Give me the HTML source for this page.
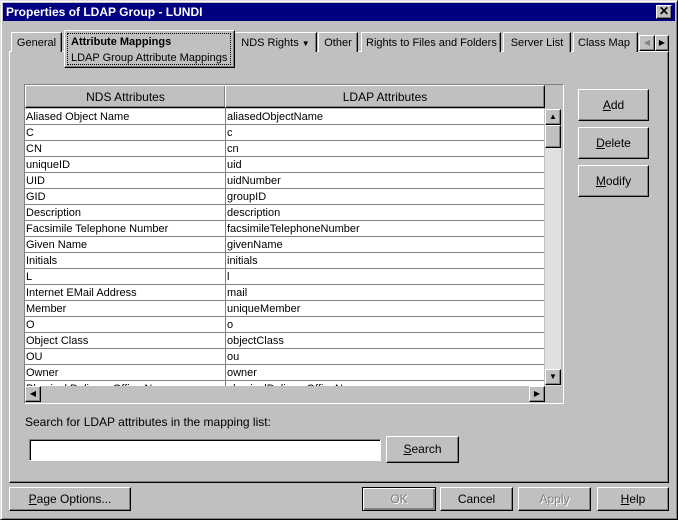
<!DOCTYPE html>
<html><head><meta charset="utf-8"><style>
*{box-sizing:border-box;margin:0;padding:0}
body{width:678px;height:520px;background:#c0c0c0;font-family:"Liberation Sans",sans-serif;font-size:11px;color:#000;position:relative;overflow:hidden}
.a{position:absolute}
.win{left:0;top:0;width:678px;height:520px;border:1px solid;border-color:#dfdfdf #000 #000 #dfdfdf;box-shadow:inset 1px 1px 0 #fff,inset -1px -1px 0 #808080}
.title{left:3px;top:3px;width:672px;height:18px;background:#000080;color:#fff;font-weight:bold;font-size:12px;line-height:18px;padding-left:3px}
.btn{position:absolute;background:#c0c0c0;border:1px solid;border-color:#fff #000 #000 #fff;box-shadow:inset -1px -1px 0 #808080;text-align:center;font-size:12px}
.tab{position:absolute;top:32px;height:20px;border:1px solid;border-bottom:none;border-color:#fff #000 #000 #fff;box-shadow:inset -1px 0 0 #808080;font-size:11px;line-height:20px;padding:0 4px;background:#c0c0c0;white-space:nowrap;overflow:hidden;text-align:center}
.row{position:absolute;left:0;width:519px;height:16px;border-bottom:1px solid #808080;background:#fff;font-size:11px;line-height:17px}
.row span{position:absolute;top:0}
.c1{left:1px}.c2{left:202px}
u{text-decoration:underline}
</style></head><body>
<div class="a win"></div>
<div class="a title">Properties of LDAP Group - LUNDI</div>
<div class="btn" style="left:656px;top:5px;width:16px;height:14px;font-size:12px;line-height:11px;font-weight:bold">✕</div>

<div class="a" style="left:9px;top:51px;width:660px;height:432px;border:1px solid;border-color:#fff #000 #000 #fff;box-shadow:inset -1px -1px 0 #808080"></div>

<div class="tab" style="left:11px;width:51px">General</div>
<div class="tab" style="left:234px;width:83px">NDS Rights <span style="font-size:8px">▼</span></div>
<div class="tab" style="left:318px;width:40px">Other</div>
<div class="tab" style="left:361px;width:140px">Rights to Files and Folders</div>
<div class="tab" style="left:503px;width:68px">Server List</div>
<div class="tab" style="left:573px;width:65px;text-align:left">Class Map</div>
<div class="btn" style="left:639px;top:35px;width:16px;height:16px;font-size:8px;line-height:14px;color:#808080">◀</div>
<div class="btn" style="left:655px;top:35px;width:14px;height:16px;font-size:8px;line-height:14px">▶</div>

<div class="a" style="left:64px;top:30px;width:171px;height:38px;background:#c0c0c0;border:1px solid;border-color:#fff #000 #000 #fff;box-shadow:inset -1px -1px 0 #808080"></div>
<div class="a" style="left:67px;top:33px;width:164px;height:32px;border:1px dotted #000"></div>
<div class="a" style="left:71px;top:36px;font-weight:bold;font-size:11px">Attribute Mappings</div>
<div class="a" style="left:71px;top:52px;font-size:11px">LDAP Group Attribute Mappings</div>

<div class="a" style="left:24px;top:84px;width:540px;height:320px;border:1px solid;border-color:#808080 #fff #fff #808080;background:#c0c0c0"></div>
<div class="a" style="left:25px;top:85px;width:520px;height:301px;overflow:hidden;background:#c0c0c0">
 <div class="btn" style="left:0;top:0;width:201px;height:23px;line-height:23px">NDS Attributes</div>
 <div class="btn" style="left:200px;top:0;width:320px;height:23px;line-height:23px">LDAP Attributes</div>
 <div style="position:absolute;left:200px;top:23px;width:1px;height:280px;background:#808080;z-index:2"></div>
 <div class="row" style="top:24px"><span class="c1">Aliased Object Name</span><span class="c2">aliasedObjectName</span></div>
 <div class="row" style="top:40px"><span class="c1">C</span><span class="c2">c</span></div>
 <div class="row" style="top:56px"><span class="c1">CN</span><span class="c2">cn</span></div>
 <div class="row" style="top:72px"><span class="c1">uniqueID</span><span class="c2">uid</span></div>
 <div class="row" style="top:88px"><span class="c1">UID</span><span class="c2">uidNumber</span></div>
 <div class="row" style="top:104px"><span class="c1">GID</span><span class="c2">groupID</span></div>
 <div class="row" style="top:120px"><span class="c1">Description</span><span class="c2">description</span></div>
 <div class="row" style="top:136px"><span class="c1">Facsimile Telephone Number</span><span class="c2">facsimileTelephoneNumber</span></div>
 <div class="row" style="top:152px"><span class="c1">Given Name</span><span class="c2">givenName</span></div>
 <div class="row" style="top:168px"><span class="c1">Initials</span><span class="c2">initials</span></div>
 <div class="row" style="top:184px"><span class="c1">L</span><span class="c2">l</span></div>
 <div class="row" style="top:200px"><span class="c1">Internet EMail Address</span><span class="c2">mail</span></div>
 <div class="row" style="top:216px"><span class="c1">Member</span><span class="c2">uniqueMember</span></div>
 <div class="row" style="top:232px"><span class="c1">O</span><span class="c2">o</span></div>
 <div class="row" style="top:248px"><span class="c1">Object Class</span><span class="c2">objectClass</span></div>
 <div class="row" style="top:264px"><span class="c1">OU</span><span class="c2">ou</span></div>
 <div class="row" style="top:280px"><span class="c1">Owner</span><span class="c2">owner</span></div>
 <div class="row" style="top:296px"><span class="c1">Physical Delivery Office Name</span><span class="c2">physicalDeliveryOfficeName</span></div>
</div>
<div class="a" style="left:545px;top:109px;width:16px;height:277px;background:#e0e0e0"></div>
<div class="btn" style="left:545px;top:109px;width:16px;height:16px;font-size:8px;line-height:14px">▲</div>
<div class="btn" style="left:545px;top:125px;width:16px;height:23px"></div>
<div class="btn" style="left:545px;top:369px;width:16px;height:16px;font-size:8px;line-height:14px">▼</div>
<div class="a" style="left:25px;top:386px;width:520px;height:16px;background:#c0c0c0"></div>
<div class="btn" style="left:25px;top:386px;width:16px;height:16px;font-size:8px;line-height:14px">◀</div>
<div class="btn" style="left:529px;top:386px;width:16px;height:16px;font-size:8px;line-height:14px">▶</div>

<div class="btn" style="left:578px;top:89px;width:71px;height:32px;line-height:30px"><u>A</u>dd</div>
<div class="btn" style="left:578px;top:127px;width:71px;height:32px;line-height:30px"><u>D</u>elete</div>
<div class="btn" style="left:578px;top:165px;width:71px;height:32px;line-height:30px"><u>M</u>odify</div>

<div class="a" style="left:25px;top:415px;font-size:12px">Search for LDAP attributes in the mapping list:</div>
<div class="a" style="left:29px;top:439px;width:352px;height:22px;background:#fff;border:1px solid;border-color:#808080 #fff #fff #808080;box-shadow:inset 1px 1px 0 #000"></div>
<div class="btn" style="left:386px;top:436px;width:73px;height:27px;line-height:25px"><u>S</u>earch</div>

<div class="btn" style="left:9px;top:487px;width:122px;height:24px;line-height:22px"><u>P</u>age Options...</div>
<div class="btn" style="left:362px;top:487px;width:74px;height:24px;line-height:22px;color:#808080;border-color:#000;box-shadow:inset 1px 1px 0 #fff,inset -2px -2px 0 #808080;text-shadow:1px 1px 0 #fff">OK</div>
<div class="btn" style="left:440px;top:487px;width:73px;height:24px;line-height:22px">Cancel</div>
<div class="btn" style="left:518px;top:487px;width:73px;height:24px;line-height:22px;color:#808080;text-shadow:1px 1px 0 #fff">Apply</div>
<div class="btn" style="left:597px;top:487px;width:72px;height:24px;line-height:22px"><u>H</u>elp</div>
</body></html>
